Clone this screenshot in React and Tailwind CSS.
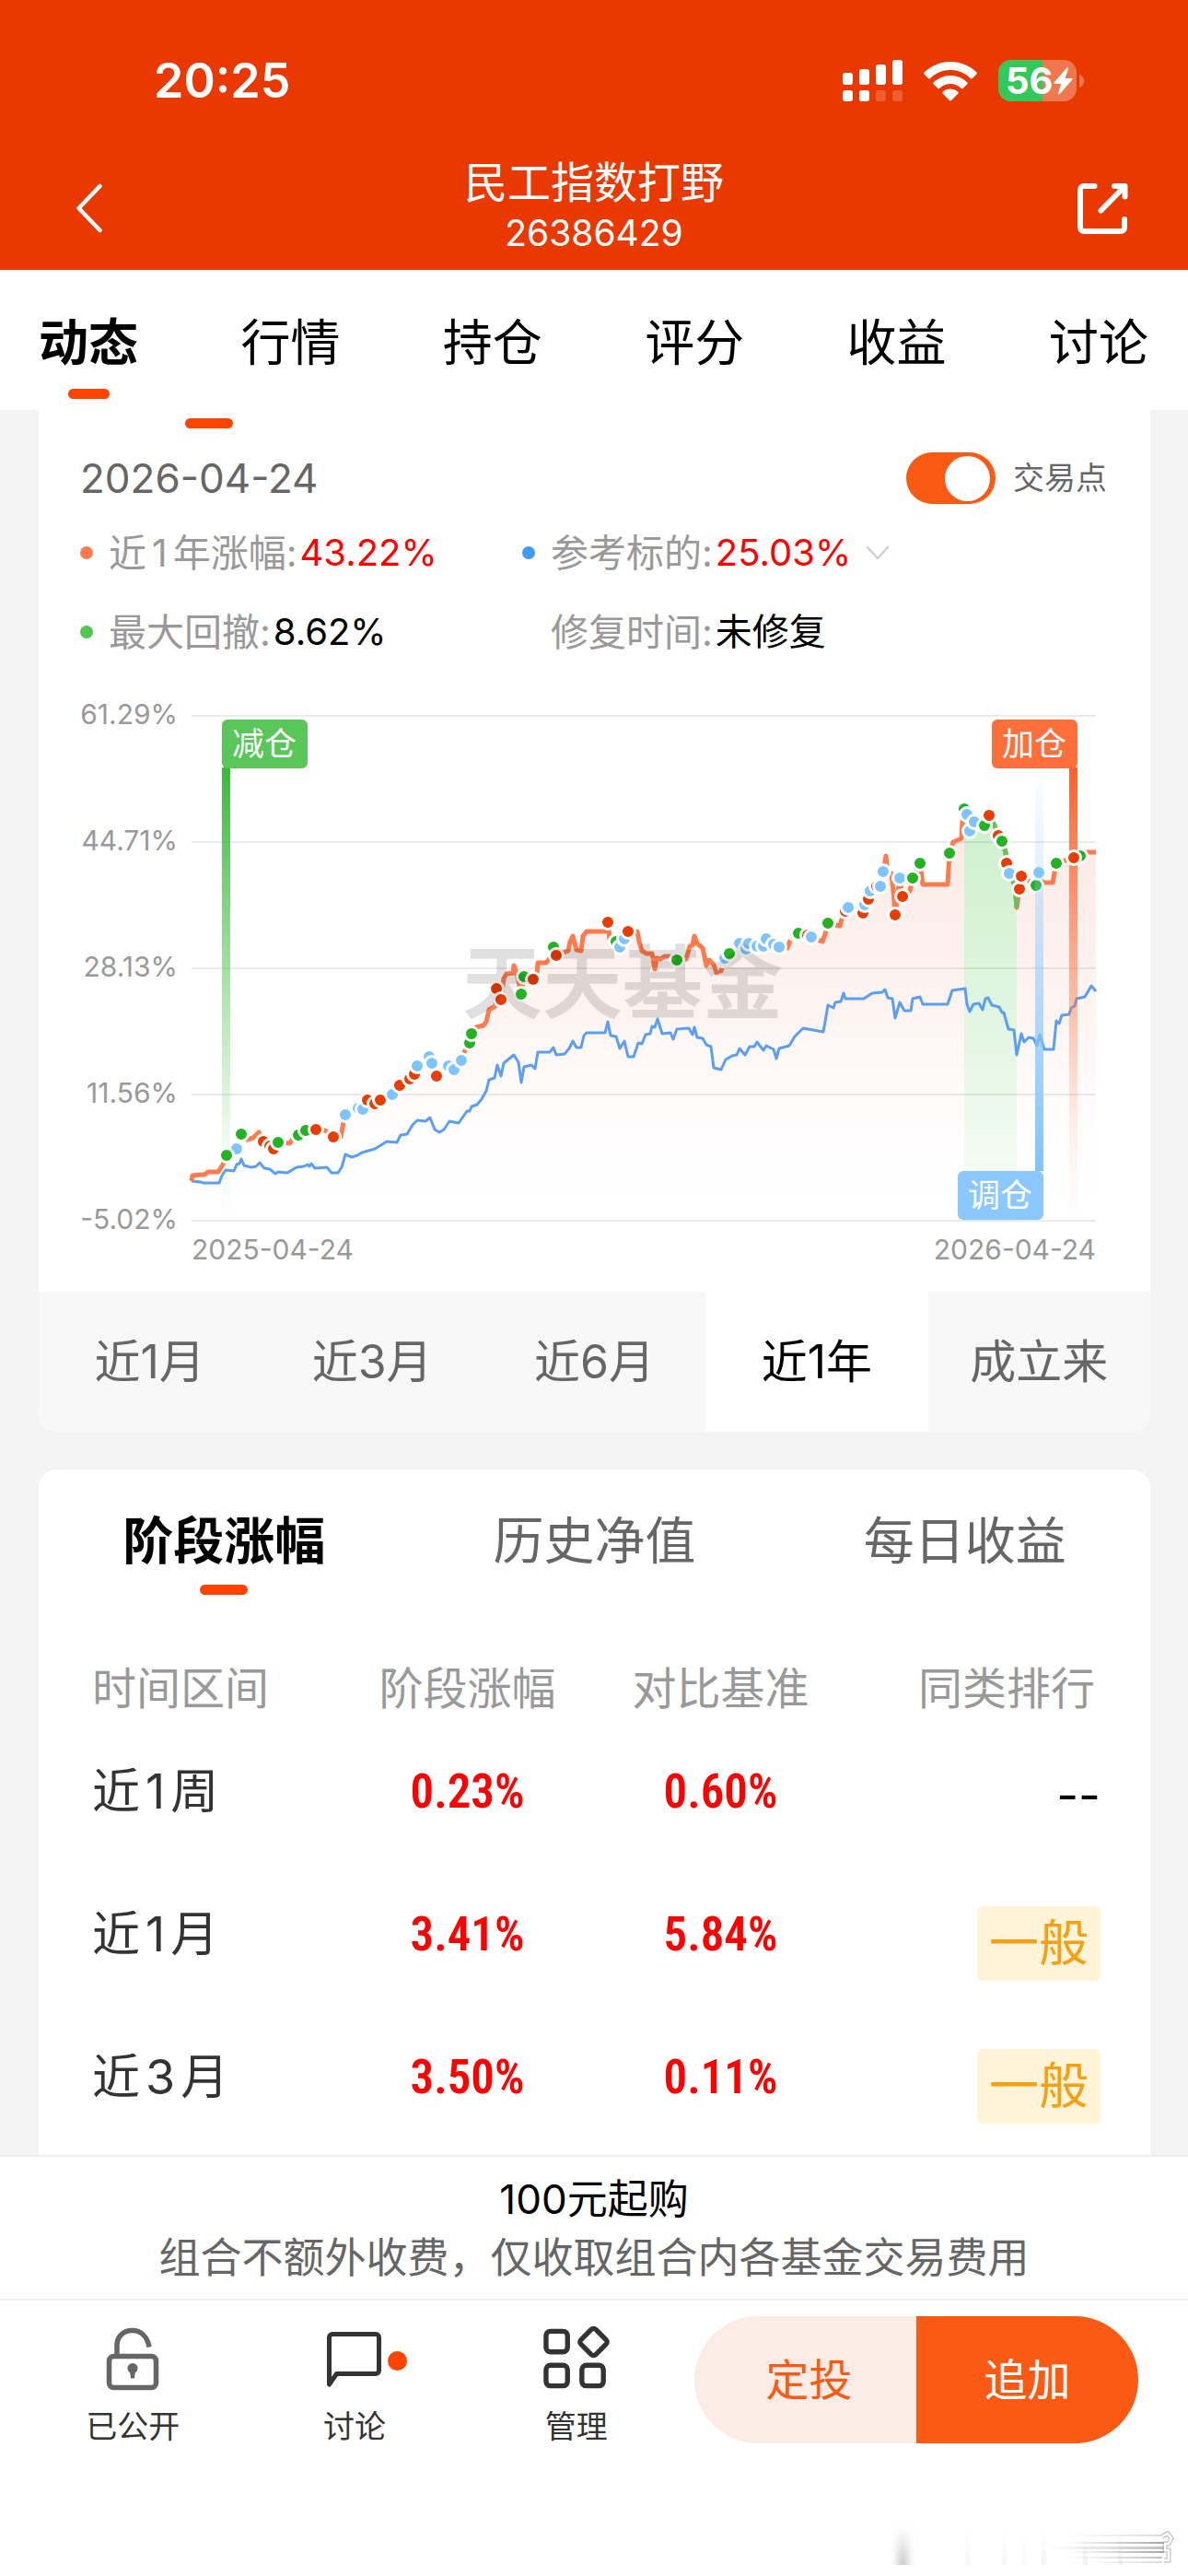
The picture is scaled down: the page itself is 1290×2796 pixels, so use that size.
import { useState } from 'react';

// ─── Icons ────────────────────────────────────────────────────────────────────

function SignalIcon({ className }) {
    return (
        <svg className={className} viewBox="0 0 65 46" fill="#fff">
            <rect x="0" y="14" width="11" height="13" rx="3" />
            <rect x="18" y="10" width="11" height="17" rx="3" />
            <rect x="36" y="5" width="11" height="22" rx="3" />
            <rect x="54" y="0" width="11" height="27" rx="3" />
            <rect x="0" y="33" width="11" height="12" rx="3" />
            <rect x="18" y="33" width="11" height="12" rx="3" />
            <rect x="36" y="33" width="11" height="12" rx="3" opacity="0.2" />
            <rect x="54" y="33" width="11" height="12" rx="3" opacity="0.2" />
        </svg>
    );
}

function WifiIcon({ className }) {
    return (
        <svg className={className} viewBox="0 0 58 43" fill="#fff">
            <path d="M29 0C18 0 8 4.300.6 11.400a1.600 1.600 0 0 0 0 2.200l4.400 4.300a1.600 1.600 0 0 0 2.200 0A31 31 0 0 1 29 9a31 31 0 0 1 21.800 8.900 1.600 1.600 0 0 0 2.200 0l4.400-4.300a1.600 1.600 0 0 0 0-2.200C50 4.300 40 0 29 0z" />
            <path d="M29 15c-7 0-13.400 2.800-18.200 7.200a1.600 1.600 0 0 0 0 2.200l4.400 4.300a1.600 1.600 0 0 0 2.200 0A17 17 0 0 1 29 24a17 17 0 0 1 11.600 4.700 1.600 1.600 0 0 0 2.200 0l4.400-4.300a1.600 1.600 0 0 0 0-2.200A26.500 26.500 0 0 0 29 15z" />
            <path d="M29 29.500c-3 0-6 1.200-8.200 3a1.500 1.500 0 0 0 0 2.200l7 7a1.700 1.700 0 0 0 2.400 0l7-7a1.500 1.500 0 0 0 0-2.200A13 13 0 0 0 29 29.500z" />
        </svg>
    );
}

function BatteryIcon({ className }) {
    return (
        <svg className={className} viewBox="0 0 94 46">
            <defs>
                <clipPath id="battery">
                    <rect width="85" height="45" rx="14" />
                </clipPath>
            </defs>
            <g clipPath="url(#battery)">
                <rect width="85" height="45" fill="#f07850" />
                <rect width="48" height="45" fill="#34c759" />
            </g>
            <path d="M88 16c3 .5 5 3.500 5 7s-2 6.500-5 7z" fill="#f07850" />
            <text x="8" y="37" fill="#fff" className="font-['Inter',sans-serif] text-[40px] font-bold">56</text>
            <path d="M74.500 8.500 60.500 24.500a.9.9 0 0 0 .7 1.500h7l-3.200 10.500c-.3 1 .9 1.400 1.500.7L80.300 21.500a.9.9 0 0 0-.7-1.500h-7l3.400-10.600c.3-1-.8-1.700-1.500-.9z" fill="#fff" />
        </svg>
    );
}

function BackIcon({ className }) {
    return (
        <svg className={className} viewBox="0 0 30 54" fill="none" stroke="#fff" strokeWidth="4.500">
            <path strokeLinecap="round" strokeLinejoin="round" d="M26.500 3 3.500 27l23 24" />
        </svg>
    );
}

function ShareIcon({ className }) {
    return (
        <svg className={className} viewBox="0 0 55 55" fill="none" stroke="#fff" strokeWidth="6">
            <path strokeLinecap="round" strokeLinejoin="round" d="M18.500 3H7a4 4 0 0 0-4 4v41a4 4 0 0 0 4 4h40a4 4 0 0 0 4-4V39" />
            <path strokeLinecap="round" strokeLinejoin="round" d="M40 3h11.500v11.500M51 3.500 25.500 29.500" />
        </svg>
    );
}

function ChevronDownIcon({ className }) {
    return (
        <svg className={className} viewBox="0 0 26 16" fill="none" stroke="#ccd0da" strokeWidth="2.500">
            <path strokeLinecap="round" strokeLinejoin="round" d="m2 2 11 12L24 2" />
        </svg>
    );
}

function LockIcon({ className }) {
    return (
        <svg className={className} viewBox="0 0 72 72" fill="none" stroke="#666" strokeWidth="5.500">
            <rect x="10.500" y="33.500" width="51" height="34" rx="5" />
            <path d="M19 33V22C19 12 26 5.500 35.500 5.500S52 12 54 23.500" />
            <circle cx="36" cy="46.500" r="5.500" fill="#666" stroke="none" />
            <path d="M33 48h6l-1 9.500h-4z" fill="#666" stroke="none" />
        </svg>
    );
}

function ChatIcon({ className }) {
    return (
        <svg className={className} viewBox="0 0 72 72" fill="none" stroke="#333" strokeWidth="5">
            <path strokeLinejoin="round" d="M8.500 64V13a3.500 3.500 0 0 1 3.500-3.500h47a3.500 3.500 0 0 1 3.500 3.500v36a3.500 3.500 0 0 1-3.500 3.500H16.500z" />
        </svg>
    );
}

function ManageIcon({ className }) {
    return (
        <svg className={className} viewBox="0 0 74 74" fill="none" stroke="#333" strokeWidth="5.500">
            <rect x="3" y="6.500" width="24" height="23" rx="5" />
            <rect x="3" y="44.500" width="24" height="23" rx="5" />
            <rect x="43" y="44.500" width="24" height="23" rx="5" />
            <path strokeLinejoin="round" d="M53.500 4.500a3.500 3.500 0 0 1 5 0l11.500 11.500a3.500 3.500 0 0 1 0 5L58.500 32.500a3.500 3.500 0 0 1-5 0L42 21a3.500 3.500 0 0 1 0-5z" />
        </svg>
    );
}

// ─── Data ─────────────────────────────────────────────────────────────────────

const PAGE_TABS = ['动态', '行情', '持仓', '评分', '收益', '讨论'];
const RANGES = ['近1月', '近3月', '近6月', '近1年', '成立来'];
const DETAIL_TABS = ['阶段涨幅', '历史净值', '每日收益'];

const STATS = [
    { key: 'gain', label: <>近<span className="mx-1.5">1</span>年涨幅:</>, value: '43.22%', dot: 'bg-[#ff7a4d]', color: 'text-[#ff0000]' },
    { key: 'base', label: '参考标的:', value: '25.03%', dot: 'bg-[#3f9bff]', color: 'text-[#ff0000]', more: true },
    { key: 'drawdown', label: '最大回撤:', value: '8.62%', dot: 'bg-[#52c552]', color: 'text-black' },
    { key: 'recovery', label: '修复时间:', value: '未修复', dot: 'invisible', color: 'text-black' },
];

const ROWS = [
    { n: '1', unit: '周', gain: '0.23%', base: '0.60%', rank: null },
    { n: '1', unit: '月', gain: '3.41%', base: '5.84%', rank: '一般' },
    { n: '3', unit: '月', gain: '3.50%', base: '0.11%', rank: '一般' },
];

// Plot area is 982 x 548, origin at the top left grid corner
const GRID = [
    { y: 0, label: '61.29%' },
    { y: 137, label: '44.71%' },
    { y: 274, label: '28.13%' },
    { y: 411, label: '11.56%' },
    { y: 548, label: '-5.02%' },
];

const FUND = '0,505 1,499 9,498 14,498 18,495 29,495 34,487 38,477 49,470 54,454 60,460 67,458 73,452 78,462 84,467 89,470 94,463 107,464 109,460 116,455 124,450 135,449 145,450 154,457 162,457 165,441 167,433 181,426 186,427 191,417 199,421 205,417 218,411 226,401 237,394 242,389 245,380 258,370 261,377 266,391 279,380 285,384 293,374 297,363 302,355 304,345 309,338 317,336 320,332 323,319 330,315 331,296 336,308 339,285 342,280 349,279 350,271 353,279 358,302 361,283 371,286 375,280 376,268 385,268 390,262 393,251 396,260 409,255 411,245 414,239 418,254 423,255 425,239 429,234 450,234 452,224 454,242 461,245 465,251 470,242 474,234 484,234 486,245 489,255 494,258 500,258 503,275 505,263 509,264 514,261 520,261 527,265 537,264 541,250 544,249 546,239 549,247 555,252 559,271 562,265 567,270 570,279 575,277 579,263 584,258 595,247 603,252 614,250 624,242 632,248 638,251 647,252 650,244 659,236 673,240 685,245 688,237 691,225 704,228 707,217 713,208 729,214 730,205 737,190 748,185 751,169 754,152 756,170 760,171 763,200 764,216 769,176 772,196 780,190 783,176 791,160 794,183 821,183 823,149 827,137 836,133 837,115 839,101 842,107 845,125 850,115 861,119 866,108 872,119 876,130 880,136 884,148 885,160 888,171 894,184 896,208 899,188 901,174 917,184 920,170 924,181 935,181 939,160 958,154 965,152 972,148 982,148';

const BASE = '0,505 10,506 13,507 30,507 33,499 37,493 46,494 49,487 52,486 54,481 57,488 65,490 70,489 74,485 79,491 85,492 91,497 94,495 104,496 114,490 122,489 126,487 128,489 130,486 134,491 147,490 152,496 159,496 163,490 167,476 174,479 180,477 185,474 199,470 204,467 212,462 223,463 227,455 234,454 240,444 245,439 254,440 259,436 264,449 269,452 274,449 280,440 290,442 299,429 302,429 304,424 310,422 315,416 320,407 323,395 329,393 332,379 336,391 339,377 345,372 350,368 355,376 358,398 361,381 369,379 373,383 376,365 389,365 393,360 396,368 405,367 410,361 414,353 418,360 423,360 426,347 429,344 449,344 452,332 455,347 461,348 465,361 470,353 474,370 480,370 485,355 489,356 493,346 498,345 500,337 503,338 506,329 511,345 520,344 523,351 527,340 540,339 544,346 546,338 549,349 555,350 559,357 564,359 567,382 575,384 580,373 587,369 592,368 595,361 601,368 606,359 611,359 614,354 621,363 624,358 632,362 635,372 638,361 649,358 655,348 664,339 686,343 688,332 691,314 697,317 699,311 705,310 708,301 710,307 730,307 739,301 750,300 753,297 756,306 761,307 764,328 769,311 774,320 781,320 783,307 791,305 794,313 821,313 826,298 840,296 842,313 845,321 849,313 855,312 859,319 862,307 865,306 869,314 877,316 880,322 882,322 887,340 893,341 896,368 901,345 904,354 909,349 914,350 918,358 921,346 926,362 936,362 939,331 942,334 945,325 953,324 955,317 959,315 961,307 970,305 977,293 982,299';

// The drawdown stretch of the fund line
const DRAWDOWN = '839,101 842,107 845,125 850,115 861,119 866,108 872,119 876,130 880,136 884,148 885,160 888,171 894,184 896,208';

const DOT_COLORS = { b: '#7fc4ff', g: '#22b222', r: '#eb3c00' };

const DOTS = [
    ['b', 49, 470], ['g', 38, 477], ['g', 54, 454], ['r', 78, 462], ['r', 85, 467], ['r', 89, 470], ['g', 94, 463],
    ['g', 116, 455], ['g', 124, 450], ['r', 135, 449], ['r', 154, 457], ['b', 167, 433], ['b', 181, 426], ['b', 186, 427],
    ['r', 191, 417], ['r', 199, 421], ['r', 205, 417], ['b', 218, 411], ['r', 226, 401], ['r', 237, 394], ['r', 242, 389],
    ['b', 245, 380], ['b', 258, 370], ['b', 261, 377], ['r', 266, 391], ['b', 279, 380], ['b', 285, 384], ['b', 293, 374],
    ['g', 302, 355], ['g', 304, 345], ['r', 331, 296], ['r', 336, 308], ['g', 361, 283], ['g', 358, 302], ['r', 371, 286],
    ['g', 393, 251], ['r', 396, 260], ['r', 452, 224], ['g', 461, 245], ['b', 465, 251], ['b', 470, 242], ['r', 474, 234],
    ['g', 527, 265], ['b', 577, 265], ['b', 579, 263], ['g', 584, 258], ['b', 595, 247], ['b', 602, 253], ['b', 605, 247],
    ['b', 614, 250], ['b', 621, 250], ['b', 624, 242], ['b', 632, 248], ['b', 638, 251], ['g', 656, 237], ['g', 659, 236],
    ['r', 669, 238], ['b', 673, 240], ['g', 691, 225], ['r', 710, 212], ['b', 713, 208], ['r', 729, 214], ['b', 731, 205],
    ['r', 735, 199], ['b', 737, 190], ['r', 744, 185], ['b', 748, 185], ['b', 751, 169], ['r', 764, 216], ['b', 769, 176],
    ['r', 772, 196], ['g', 783, 176], ['g', 791, 160], ['g', 823, 149], ['g', 839, 101], ['b', 842, 107], ['b', 845, 125],
    ['b', 850, 115], ['g', 861, 119], ['r', 866, 108], ['r', 876, 130], ['g', 880, 136], ['r', 885, 160], ['b', 888, 171],
    ['r', 899, 188], ['r', 901, 174], ['g', 917, 184], ['b', 920, 170], ['g', 939, 160], ['g', 965, 152],
];

// Trade point under the open flag, drawn over its pole
const CURRENT = { x: 958, y: 154 };

// ─── Chart ────────────────────────────────────────────────────────────────────

function Flag({ x, y, fill, children }) {
    return (
        <g>
            <rect x={x} y={y} width="93" height="53" rx="6" fill={fill} />
            <text x={x + 46} y={y + 39} textAnchor="middle" fill="#fff" className="text-[35px]">{children}</text>
        </g>
    );
}

function PerformanceChart() {
    return (
        <svg className="block w-full h-auto mt-[35px]" viewBox="-166 -28 1207 653" role="img" aria-label="近1年收益走势">
            <defs>
                <linearGradient id="fundArea" x1="0" y1="100" x2="0" y2="548" gradientUnits="userSpaceOnUse">
                    <stop offset="0" stopColor="#fbe9e4" />
                    <stop offset="0.5" stopColor="#fdf3f0" stopOpacity="0.9" />
                    <stop offset="1" stopColor="#fff" stopOpacity="0" />
                </linearGradient>
                <linearGradient id="drawdownArea" x1="0" y1="100" x2="0" y2="520" gradientUnits="userSpaceOnUse">
                    <stop offset="0" stopColor="#cdf0cd" />
                    <stop offset="0.5" stopColor="#e0f5e0" />
                    <stop offset="1" stopColor="#f7fcf7" />
                </linearGradient>
                <linearGradient id="greenPole" x1="0" y1="0" x2="0" y2="1">
                    <stop offset="0" stopColor="#3cb83c" />
                    <stop offset="0.8" stopColor="#52c552" stopOpacity="0.1" />
                    <stop offset="1" stopColor="#52c552" stopOpacity="0" />
                </linearGradient>
                <linearGradient id="orangePole" x1="0" y1="0" x2="0" y2="1">
                    <stop offset="0" stopColor="#ff5f2a" />
                    <stop offset="0.8" stopColor="#ff7a4d" stopOpacity="0.1" />
                    <stop offset="1" stopColor="#ff7a4d" stopOpacity="0" />
                </linearGradient>
                <linearGradient id="bluePole" x1="0" y1="1" x2="0" y2="0">
                    <stop offset="0" stopColor="#7fc4ff" />
                    <stop offset="1" stopColor="#8cc8ff" stopOpacity="0" />
                </linearGradient>
            </defs>

            <polygon points={`0,548 ${FUND} 982,548`} fill="url(#fundArea)" />
            <polygon points={`839,548 ${DRAWDOWN} 896,548`} fill="url(#drawdownArea)" />

            {GRID.map(({ y, label }) => (
                <g key={label}>
                    <path d={`M0 ${y}H982`} stroke="#000" strokeOpacity="0.08" strokeWidth="2" />
                    <text x="-15" y={y + 9} textAnchor="end" fill="#999" className="text-[30px]">{label}</text>
                </g>
            ))}
            <text x="0" y="590" fill="#999" className="text-[30px]">2025-04-24</text>
            <text x="982" y="590" textAnchor="end" fill="#999" className="text-[30px]">2026-04-24</text>

            <polyline points={BASE} fill="none" stroke="#5b9ff5" strokeWidth="3" strokeLinejoin="round" />
            <polyline points={FUND} fill="none" stroke="#ff7a4d" strokeWidth="5" strokeLinejoin="round" />
            <polyline points={DRAWDOWN} fill="none" stroke="#6bbf5a" strokeWidth="5" strokeLinejoin="round" />

            {DOTS.map(([color, x, y], i) => (
                <circle key={i} cx={x} cy={y} r="7.500" fill={DOT_COLORS[color]} stroke="#fff" strokeWidth="3" />
            ))}

            <text x="468" y="322" textAnchor="middle" fill="#000" fillOpacity="0.12" className="text-[87px] font-bold">天天基金</text>

            <rect x="33" y="56" width="9" height="492" fill="url(#greenPole)" />
            <rect x="916" y="56" width="9" height="438" fill="url(#bluePole)" />
            <rect x="953" y="56" width="9" height="492" fill="url(#orangePole)" />
            <circle cx={CURRENT.x} cy={CURRENT.y} r="7.500" fill={DOT_COLORS.r} stroke="#fff" strokeWidth="3" />
            <Flag x={33} y={4} fill="#58c658">减仓</Flag>
            <Flag x={869} y={4} fill="#ff6f3c">加仓</Flag>
            <Flag x={832} y={494} fill="#8ac8ff">调仓</Flag>
        </svg>
    );
}

function TradePointSwitch() {
    const [on, setOn] = useState(true);

    return (
        <label className="flex items-center gap-[19px] text-[34px] leading-[56px] text-[#666]">
            <input
                type="checkbox"
                role="switch"
                checked={on}
                onChange={() => setOn(!on)}
                className="appearance-none flex items-center w-[97px] h-[56px] rounded-full bg-[#ccc] px-1.5 checked:bg-[#fa5a14] checked:justify-end before:block before:size-[49px] before:rounded-full before:bg-white"
            />
            交易点
        </label>
    );
}

// ─── Sections ─────────────────────────────────────────────────────────────────

function Header() {
    return (
        <header className="bg-[#e93800] text-white pt-[60px] pb-3">
            <div className="flex items-center justify-between h-[56px] pl-[167px] pr-[112px]">
                <span className="text-[52px] leading-[56px] font-semibold">20:25</span>
                <div className="flex items-center gap-[23px]">
                    <SignalIcon className="w-[65px] h-[46px]" />
                    <WifiIcon className="w-[58px] h-[43px]" />
                    <BatteryIcon className="w-[94px] h-[46px] overflow-visible" />
                </div>
            </div>
            <div className="flex items-center justify-between mt-[55px] pl-[82px] pr-[65px]">
                <button type="button" aria-label="返回" className="w-[38px]">
                    <BackIcon className="w-[30px] h-[54px]" />
                </button>
                <div className="text-center">
                    <h1 className="text-[47px] leading-[54px]">民工指数打野</h1>
                    <p className="text-[39px] leading-[56px]">26386429</p>
                </div>
                <button type="button" aria-label="分享">
                    <ShareIcon className="size-[55px]" />
                </button>
            </div>
        </header>
    );
}

function PageTabs() {
    return (
        <nav className="flex justify-between bg-white pl-[42px] pr-[43px] pt-12 pb-3">
            {PAGE_TABS.map((tab, i) => (
                <a key={tab} href="#" className={`flex flex-col items-center text-[54px] leading-[64px] ${i === 0 ? 'font-bold' : ''}`}>
                    {tab}
                    {i === 0 && <span className="w-[45px] h-[11px] mt-[17px] rounded-full bg-[#ff4400]" />}
                </a>
            ))}
        </nav>
    );
}

function PerformanceCard() {
    const [range, setRange] = useState('近1年');

    return (
        <section className="bg-white rounded-b-[20px] overflow-hidden">
            <div className="pl-[45px] pr-[47px] pt-[9px]">
                <div className="w-[52px] h-[11px] ml-[114px] rounded-full bg-[#ff4400]" />
                <div className="flex items-center justify-between mt-[26px]">
                    <span className="text-[44px] leading-[56px] text-[#666]">2026-04-24</span>
                    <TradePointSwitch />
                </div>
                <dl className="grid grid-cols-[480px_1fr] gap-y-[30px] mt-[25px] text-[41px] leading-[56px]">
                    {STATS.map(({ key, label, value, dot, color, more }) => (
                        <div key={key} className="flex items-center">
                            <span className={`size-[14px] mr-[17px] rounded-full ${dot}`} />
                            <dt className="text-[#999]">{label}</dt>
                            <dd className={`ml-[3px] text-[40px] ${color}`}>{value}</dd>
                            {more && (
                                <button type="button" aria-label="切换参考标的" className="ml-4">
                                    <ChevronDownIcon className="w-[26px] h-[16px]" />
                                </button>
                            )}
                        </div>
                    ))}
                </dl>
            </div>
            <PerformanceChart />
            <div className="grid grid-cols-5 bg-[#f8f8f8]">
                {RANGES.map((item) => (
                    <button
                        key={item}
                        type="button"
                        onClick={() => setRange(item)}
                        className={`h-[152px] text-[50px] leading-[64px] ${item === range ? 'bg-white text-black' : 'text-[#666]'}`}
                    >
                        {item}
                    </button>
                ))}
            </div>
        </section>
    );
}

function DetailCard() {
    return (
        <section className="mt-[41px] bg-white rounded-t-[20px] pt-[45px] pb-[7px]">
            <div className="grid grid-cols-3 h-[91px]">
                {DETAIL_TABS.map((tab, i) => (
                    <a
                        key={tab}
                        href="#"
                        className={`flex flex-col items-center text-[55px] leading-[64px] ${i === 0 ? 'font-bold text-black' : 'text-[#666]'}`}
                    >
                        {tab}
                        {i === 0 && <span className="w-[52px] h-[11px] mt-4 rounded-full bg-[#ff4400]" />}
                    </a>
                ))}
            </div>
            <div className="pl-[58px] pr-[54px] mt-[70px]">
                <table className="w-full table-fixed">
                    <thead className="text-[48px] leading-[64px] text-[#999]">
                        <tr>
                            <th className="w-[270px] pb-0.5 text-left font-normal">时间区间</th>
                            <th className="pb-0.5 font-normal">阶段涨幅</th>
                            <th className="pb-0.5 font-normal">对比基准</th>
                            <th className="pr-1.5 pb-0.5 text-right font-normal">同类排行</th>
                        </tr>
                    </thead>
                    <tbody>
                        {ROWS.map(({ n, unit, gain, base, rank }) => (
                            <tr key={n + unit} className="h-[155px] text-[52px] leading-[81px]">
                                <td className="text-[#333]">近<span className="mx-1.5">{n}</span>{unit}</td>
                                <td className="text-center text-[51px] font-semibold text-[#ff0000] font-['Roboto_Condensed',Roboto,sans-serif]">{gain}</td>
                                <td className="text-center text-[51px] font-semibold text-[#ff0000] font-['Roboto_Condensed',Roboto,sans-serif]">{base}</td>
                                {rank ? (
                                    <td className="pt-5 text-right">
                                        <span className="inline-block px-[13px] rounded-md bg-[#fff3d8] text-[54px] text-[#f5a011]">{rank}</span>
                                    </td>
                                ) : (
                                    <td className="pt-2 text-right">--</td>
                                )}
                            </tr>
                        ))}
                    </tbody>
                </table>
            </div>
        </section>
    );
}

function ActionItem({ icon, label, badge }) {
    return (
        <button type="button" className="flex flex-1 flex-col items-center pt-2.5 text-[34px] leading-[40px] text-[#333]">
            <span className="relative">
                {icon}
                {badge && <span className="absolute left-[72px] top-[28px] size-[21px] rounded-full bg-[#ff4400]" />}
            </span>
            <span className="mt-[18px]">{label}</span>
        </button>
    );
}

function BottomBar() {
    return (
        <footer className="bg-white border-t-2 border-[#eee]">
            <div className="pt-[18px] pb-[14px] text-center">
                <p className="text-[44px] leading-[56px] text-black">100元起购</p>
                <p className="mt-1.5 text-[45px] leading-[60px] text-[#666]">组合不额外收费，仅收取组合内各基金交易费用</p>
            </div>
            <div className="flex items-start border-t-2 border-[#f0f0f0] pl-6 pr-[54px] pt-[17px]">
                <div className="flex flex-1 mr-2">
                    <ActionItem icon={<LockIcon className="size-[72px]" />} label="已公开" />
                    <ActionItem icon={<ChatIcon className="size-[72px]" />} label="讨论" badge />
                    <ActionItem icon={<ManageIcon className="size-[72px]" />} label="管理" />
                </div>
                <div className="grid grid-cols-2 w-[482px] h-[138px] rounded-full overflow-hidden text-[47px]">
                    <button type="button" className="pl-2 bg-[#fcece6] text-[#fa5a14]">定投</button>
                    <button type="button" className="bg-[#fa5a14] text-white">追加</button>
                </div>
            </div>
            <SmudgedStamp />
        </footer>
    );
}

// Washed-out stamp in the bottom corner
function SmudgedStamp() {
    return (
        <div className="flex justify-end mt-[87px] pr-3 pb-[13px]">
            <svg className="w-[310px] h-[43px]" viewBox="0 0 310 43" aria-hidden="true">
                <defs>
                    <linearGradient id="streakY" x1="0" y1="0" x2="0" y2="1">
                        <stop offset="0" stopColor="#999" stopOpacity="0" />
                        <stop offset="1" stopColor="#888" stopOpacity="0.5" />
                    </linearGradient>
                    <linearGradient id="streakX" x1="0" y1="0" x2="1" y2="0">
                        <stop offset="0" stopColor="#888" stopOpacity="0" />
                        <stop offset="1" stopColor="#666" stopOpacity="0.6" />
                    </linearGradient>
                    <filter id="soft" x="-80%" y="-10%" width="260%" height="120%">
                        <feGaussianBlur stdDeviation="4 0" />
                    </filter>
                </defs>
                <g fill="url(#streakY)">
                    <rect x="7" width="11" height="43" filter="url(#soft)" />
                    <rect x="80" y="6" width="6" height="37" opacity="0.15" />
                    <rect x="120" y="6" width="5" height="37" opacity="0.15" />
                    <rect x="142" y="6" width="4" height="37" opacity="0.1" />
                    <rect x="163" y="6" width="5" height="37" opacity="0.2" />
                    <rect x="208" y="6" width="5" height="37" opacity="0.2" />
                    <rect x="246" y="6" width="5" height="37" opacity="0.2" />
                </g>
                <g fill="url(#streakX)">
                    <rect x="190" y="10" width="104" height="2" opacity="0.4" />
                    <rect x="190" y="18" width="106" height="2" />
                    <rect x="170" y="23" width="126" height="3" opacity="0.7" />
                    <rect x="190" y="28" width="106" height="2" />
                    <rect x="190" y="34" width="104" height="2" opacity="0.7" />
                    <rect x="210" y="39" width="84" height="2" opacity="0.4" />
                </g>
                <path d="m294 12 6-3 4 5-3 6h-4v7h4v11h-5" fill="none" stroke="#999" strokeOpacity="0.6" strokeWidth="5" />
                <path d="m294 12 6-3 4 5-3 6h-4v7h4v11h-5" fill="none" stroke="#fff" strokeWidth="2.500" />
            </svg>
        </div>
    );
}

// ─── Page ─────────────────────────────────────────────────────────────────────

export default function App() {
    return (
        <div className="min-h-screen bg-white text-black font-['Inter','Noto_Sans_CJK_SC',sans-serif]">
            <Header />
            <PageTabs />
            <main className="bg-[#f4f4f4] pl-[42px] pr-[41px]">
                <PerformanceCard />
                <DetailCard />
            </main>
            <BottomBar />
        </div>
    );
}
